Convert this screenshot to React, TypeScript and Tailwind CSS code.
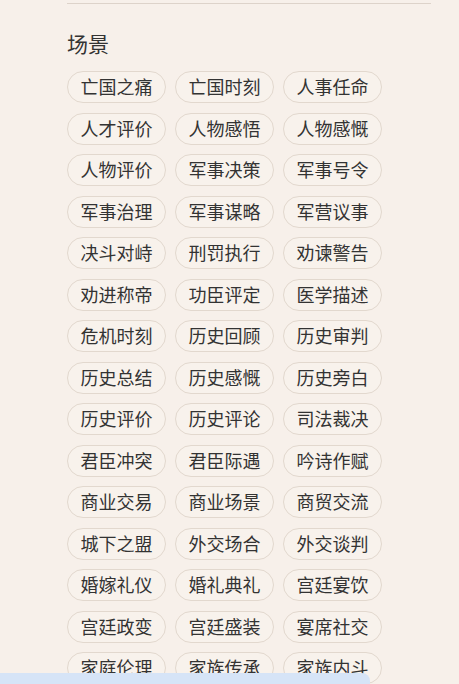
import React from 'react';

const scenes = [
  '亡国之痛', '亡国时刻', '人事任命',
  '人才评价', '人物感悟', '人物感慨',
  '人物评价', '军事决策', '军事号令',
  '军事治理', '军事谋略', '军营议事',
  '决斗对峙', '刑罚执行', '劝谏警告',
  '劝进称帝', '功臣评定', '医学描述',
  '危机时刻', '历史回顾', '历史审判',
  '历史总结', '历史感慨', '历史旁白',
  '历史评价', '历史评论', '司法裁决',
  '君臣冲突', '君臣际遇', '吟诗作赋',
  '商业交易', '商业场景', '商贸交流',
  '城下之盟', '外交场合', '外交谈判',
  '婚嫁礼仪', '婚礼典礼', '宫廷宴饮',
  '宫廷政变', '宫廷盛装', '宴席社交',
  '家庭伦理', '家族传承', '家族内斗',
];

export default function App() {
  return (
    <div className="min-h-screen bg-[#f7f0ea] pb-6 font-['Noto_Sans_CJK_SC',sans-serif] text-[#333]">
      <div className="ml-[67px] w-[364px] pt-[3px]">
        <div className="border-t border-[#ddd3ca]" />
        <h2 className="mt-[24px] text-[21px] leading-[30px] text-[#333]">场景</h2>
        <div className="mt-[13px] grid grid-cols-[repeat(3,99px)] gap-x-[9px] gap-y-[9.5px]">
          {scenes.map((s) => (
            <span
              key={s}
              className="flex h-8 items-center justify-center rounded-full border border-[#e2d8ce] bg-[#f8f2ec] pb-[2px] text-[18px] leading-none"
            >
              {s}
            </span>
          ))}
        </div>
      </div>
      <div className="fixed bottom-0 left-0 h-[11px] w-[370px] rounded-tr-lg bg-[#d6e4f7]" />
    </div>
  );
}
